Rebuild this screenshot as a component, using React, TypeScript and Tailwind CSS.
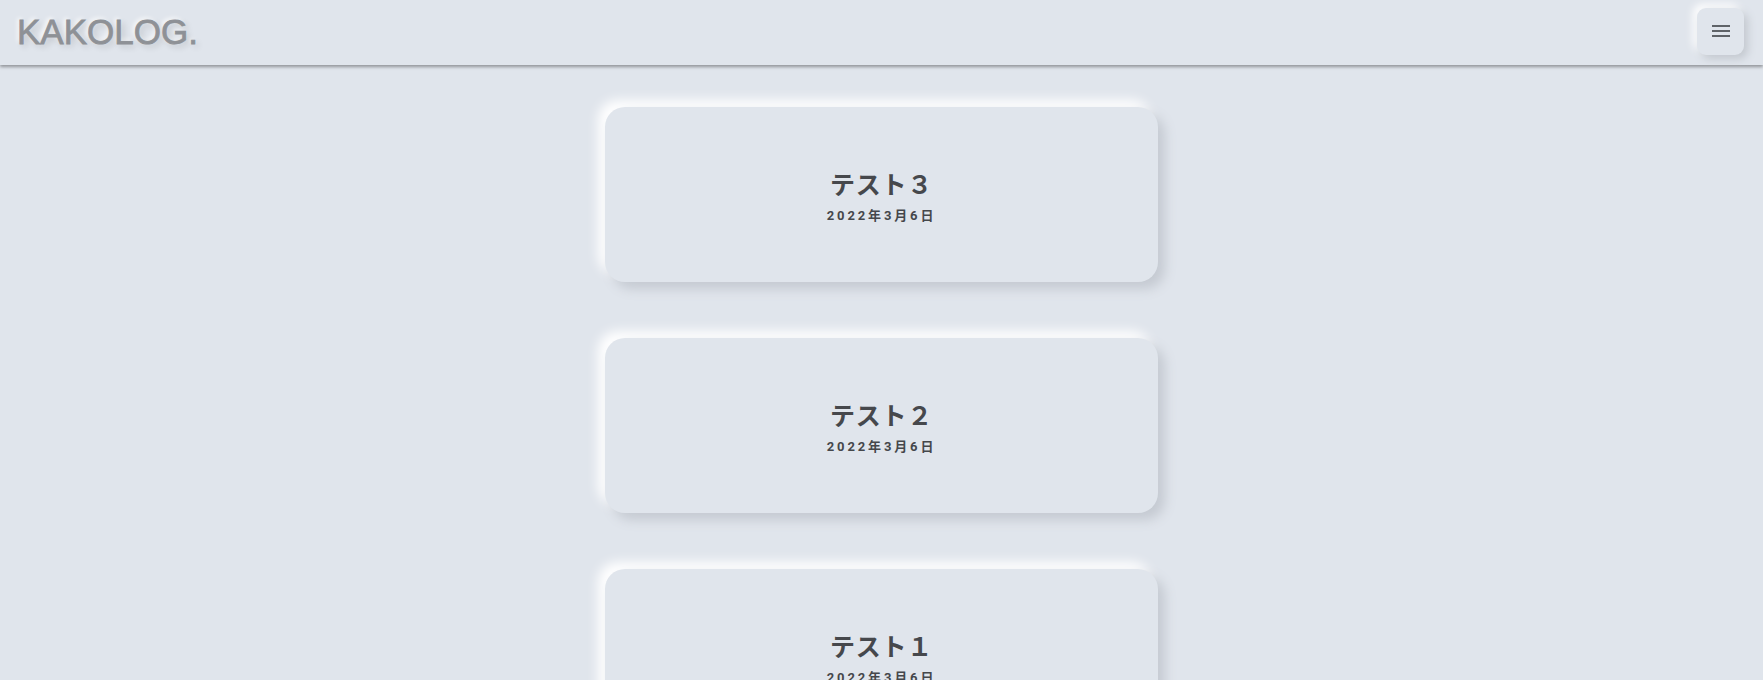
import React from "react";

const posts = [
  { title: "テスト３", date: "2022年3月6日" },
  { title: "テスト２", date: "2022年3月6日" },
  { title: "テスト１", date: "2022年3月6日" },
];

export default function App() {
  return (
    <div className="min-h-screen bg-[#e0e5ec] font-['Roboto','Noto_Sans_CJK_JP',sans-serif]">
      <header className="h-[65px] bg-[#e0e5ec] flex items-center justify-between pl-[17px] pr-[19px] shadow-[0_2px_3px_rgba(0,0,0,0.35)] relative z-10">
        <h1 className="font-['Liberation_Sans',sans-serif] text-[35px] leading-none text-[#8e9196] [-webkit-text-stroke:0.8px_#8e9196] [text-shadow:3px_3px_6px_rgba(0,0,0,0.16),-2px_-2px_4px_rgba(255,255,255,0.9)] mt-[-2px]">
          KAKOLOG.
        </h1>
        <button className="w-[47px] h-[47px] rounded-[9px] bg-[#e0e5ec] flex items-center justify-center shadow-[4px_4px_8px_#c3c8cf,-4px_-4px_8px_#ffffff] mt-[-3px]">
          <svg width="24" height="24" viewBox="0 0 24 24">
            <rect x="3" y="6" width="18" height="2" fill="#5f6368" />
            <rect x="3" y="11" width="18" height="2" fill="#5f6368" />
            <rect x="3" y="16" width="18" height="2" fill="#5f6368" />
          </svg>
        </button>
      </header>
      <main className="flex flex-col items-center pt-[42px] gap-[56px] pb-[60px]">
        {posts.map((p) => (
          <div
            key={p.title}
            className="w-[553px] h-[175px] rounded-[20px] bg-[#e0e5ec] flex flex-col items-center justify-center shadow-[7px_7px_12px_#c5cad2,-7px_-7px_12px_#ffffff]"
          >
            <div className="text-[25px] leading-none font-semibold text-[#46484c] tracking-[0.03em] font-['Noto_Sans_CJK_JP',sans-serif] mt-[4px]">
              {p.title}
            </div>
            <div className="mt-[13px] text-[13px] leading-none font-bold text-[#45474b] tracking-[0.22em] font-['Roboto','Noto_Sans_CJK_JP',sans-serif]">
              {p.date}
            </div>
          </div>
        ))}
      </main>
    </div>
  );
}
